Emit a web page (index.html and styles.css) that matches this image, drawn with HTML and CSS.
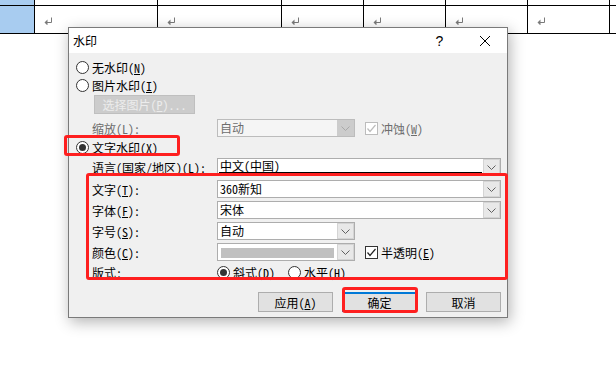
FILE: index.html
```html
<!DOCTYPE html>
<html>
<head>
<meta charset="utf-8">
<title>水印</title>
<link rel="stylesheet" href="styles.css">
</head>

<body>

<div class="doc">
  <div class="doc-row doc-row-top">
    <div class="cell cell-sel"></div>
    <div class="cell cell-wide"></div>
    <div class="cell cell-wider"></div>
    <div class="cell cell-narrow"></div>
    <div class="cell cell-narrow"></div>
    <div class="cell cell-narrow"></div>
    <div class="cell cell-narrow"></div>
    <div class="cell cell-rest"></div>
  </div>
  <div class="doc-row doc-row-main">
    <div class="cell cell-sel"></div>
    <div class="cell cell-wide"><svg class="para" width="9" height="8" viewBox="0 0 9 8"><path d="M7.5 0.5V5.5H2.5" stroke="#7a7a7a" fill="none"/><path d="M0.5 5.5L3.5 2.5V8.5Z" fill="#7a7a7a"/></svg></div>
    <div class="cell cell-wider"><svg class="para" width="9" height="8" viewBox="0 0 9 8"><path d="M7.5 0.5V5.5H2.5" stroke="#7a7a7a" fill="none"/><path d="M0.5 5.5L3.5 2.5V8.5Z" fill="#7a7a7a"/></svg></div>
    <div class="cell cell-narrow"><svg class="para" width="9" height="8" viewBox="0 0 9 8"><path d="M7.5 0.5V5.5H2.5" stroke="#7a7a7a" fill="none"/><path d="M0.5 5.5L3.5 2.5V8.5Z" fill="#7a7a7a"/></svg></div>
    <div class="cell cell-narrow"><svg class="para" width="9" height="8" viewBox="0 0 9 8"><path d="M7.5 0.5V5.5H2.5" stroke="#7a7a7a" fill="none"/><path d="M0.5 5.5L3.5 2.5V8.5Z" fill="#7a7a7a"/></svg></div>
    <div class="cell cell-narrow"><svg class="para" width="9" height="8" viewBox="0 0 9 8"><path d="M7.5 0.5V5.5H2.5" stroke="#7a7a7a" fill="none"/><path d="M0.5 5.5L3.5 2.5V8.5Z" fill="#7a7a7a"/></svg></div>
    <div class="cell cell-narrow"><svg class="para" width="9" height="8" viewBox="0 0 9 8"><path d="M7.5 0.5V5.5H2.5" stroke="#7a7a7a" fill="none"/><path d="M0.5 5.5L3.5 2.5V8.5Z" fill="#7a7a7a"/></svg></div>
    <div class="cell cell-rest"></div>
  </div>
</div>

<div class="dialog">
  <div class="titlebar">
    <span class="title">水印</span>
    <span class="tb-btn">?</span>
    <span class="tb-btn">
      <svg width="12" height="12" viewBox="0 0 12 12"><path d="M1 1L11 11M11 1L1 11" stroke="#000" stroke-width="1" fill="none"/></svg>
    </span>
  </div>

  <div class="dialog-body">
    <div class="opt-row">
      <span class="radio"></span><span>无水印(<u>N</u>)</span>
    </div>
    <div class="opt-row">
      <span class="radio"></span><span>图片水印(<u>I</u>)</span>
    </div>
    <div class="pick-row">
      <span class="btn btn-pick">选择图片(<u>P</u>)...</span>
    </div>

    <div class="form-row row-scale">
      <span class="label disabled">缩放(<u>L</u>):</span>
      <span class="select select-short select-disabled">
        <span class="select-text">自动</span>
        <span class="select-arrow"><svg width="9" height="5" viewBox="0 0 9 5"><polyline points="0.5,0.5 4.5,4.5 8.5,0.5" fill="none" stroke="#a8a8a8"/></svg></span>
      </span>
      <span class="check check-disabled"><svg width="11" height="11" viewBox="0 0 11 11"><polyline points="1.5,5.5 4,8.5 9.5,2" fill="none" stroke="#bcbcbc" stroke-width="1.2"/></svg></span>
      <span class="disabled">冲蚀(<u>W</u>)</span>
    </div>

    <div class="opt-row row-text">
      <span class="radio checked"></span><span>文字水印(<u>X</u>)</span>
    </div>

    <div class="form-row row-lang">
      <span class="label">语言(国家/地区)(<u>L</u>):</span>
      <span class="select select-long">
        <span class="select-text focused">中文(中国)</span>
        <span class="select-arrow"><svg width="9" height="5" viewBox="0 0 9 5"><polyline points="0.5,0.5 4.5,4.5 8.5,0.5" fill="none" stroke="#606060"/></svg></span>
      </span>
    </div>

    <div class="form-row row-word">
      <span class="label">文字(<u>T</u>):</span>
      <span class="select select-long">
        <span class="select-text">360新知</span>
        <span class="select-arrow"><svg width="9" height="5" viewBox="0 0 9 5"><polyline points="0.5,0.5 4.5,4.5 8.5,0.5" fill="none" stroke="#606060"/></svg></span>
      </span>
    </div>

    <div class="form-row row-font">
      <span class="label">字体(<u>F</u>):</span>
      <span class="select select-long">
        <span class="select-text">宋体</span>
        <span class="select-arrow"><svg width="9" height="5" viewBox="0 0 9 5"><polyline points="0.5,0.5 4.5,4.5 8.5,0.5" fill="none" stroke="#606060"/></svg></span>
      </span>
    </div>

    <div class="form-row row-size">
      <span class="label">字号(<u>S</u>):</span>
      <span class="select select-short">
        <span class="select-text">自动</span>
        <span class="select-arrow"><svg width="9" height="5" viewBox="0 0 9 5"><polyline points="0.5,0.5 4.5,4.5 8.5,0.5" fill="none" stroke="#606060"/></svg></span>
      </span>
    </div>

    <div class="form-row row-color">
      <span class="label">颜色(<u>C</u>):</span>
      <span class="select select-short">
        <span class="color-swatch"></span>
        <span class="select-arrow"><svg width="9" height="5" viewBox="0 0 9 5"><polyline points="0.5,0.5 4.5,4.5 8.5,0.5" fill="none" stroke="#606060"/></svg></span>
      </span>
      <span class="check"><svg width="11" height="11" viewBox="0 0 11 11"><polyline points="1.5,5.5 4,8.5 9.5,2" fill="none" stroke="#222" stroke-width="1.2"/></svg></span>
      <span>半透明(<u>E</u>)</span>
    </div>

    <div class="form-row row-layout">
      <span class="label">版式:</span>
      <span class="layout-opt"><span class="radio checked"></span><span>斜式(<u>D</u>)</span></span>
      <span class="layout-opt"><span class="radio"></span><span>水平(<u>H</u>)</span></span>
    </div>

    <div class="button-bar">
      <span class="btn">应用(<u>A</u>)</span>
      <span class="btn btn-default">确定</span>
      <span class="btn">取消</span>
    </div>
  </div>
</div>

<!-- red annotation boxes drawn over the dialog -->
<div class="mark-box mark-radio"></div>
<div class="mark-box mark-fields"></div>
<div class="mark-box mark-ok"></div>

</body>
</html>
```

FILE: styles.css
```css
body {
  background-color: #fff;
  color: #000;
  font-family: 'Noto Sans CJK SC', 'DejaVu Sans', sans-serif;
  font-feature-settings: "hwid";
  font-size: 12px;
  height: 389px;
  margin: 0;
  overflow: hidden;
  position: relative;
  width: 616px;
}

u {
  text-decoration: underline;
  text-underline-offset: 1px;
}


/* Document table behind the dialog */
.doc-row {
  border-bottom: 1px solid #000;
  box-sizing: border-box;
  display: flex;
}
.doc-row-top {
  height: 6px;
}
.doc-row-main {
  height: 28px;
}
.cell {
  border-right: 1px solid #000;
  box-sizing: border-box;
  flex: none;
}
.cell-sel {
  background-color: #a8ccf0;
  width: 35px;
}
.cell-wide {
  width: 123px;
}
.cell-wider {
  width: 124px;
}
.cell-narrow {
  width: 82px;
}
.cell-rest {
  border-right: none;
  flex: 1;
}
.para {
  display: block;
  margin: 11px 0 0 9px;
}


/* Dialog window */
.dialog {
  background-color: #f0f0f0;
  border: 1px solid #7a7a7a;
  box-shadow: 2px 4px 14px rgba(0, 0, 0, 0.3);
  box-sizing: border-box;
  height: 291px;
  left: 68px;
  position: absolute;
  top: 27px;
  width: 440px;
}

.titlebar {
  align-items: center;
  background-color: #fff;
  display: flex;
  height: 25px;
}
.title {
  flex: 1;
  padding-left: 4px;
}
.tb-btn {
  align-items: center;
  display: flex;
  font-family: 'Liberation Sans', sans-serif;
  font-size: 14px;
  height: 25px;
  justify-content: center;
  width: 45px;
}

.dialog-body {
  padding: 5px 6px 0 7px;
}

.opt-row {
  align-items: center;
  display: flex;
  height: 18px;
}

.radio {
  align-items: center;
  background-color: #fff;
  border: 1px solid #333;
  border-radius: 50%;
  box-sizing: border-box;
  display: flex;
  flex: none;
  height: 13px;
  justify-content: center;
  margin-right: 3px;
  width: 13px;
}
.radio.checked::after {
  background-color: #333;
  border-radius: 50%;
  content: "";
  height: 7px;
  width: 7px;
}

.check {
  align-items: center;
  background-color: #fff;
  border: 1px solid #333;
  box-sizing: border-box;
  display: flex;
  flex: none;
  height: 13px;
  justify-content: center;
  margin: 0 3px 0 10px;
  width: 13px;
}
.check-disabled {
  border-color: #bcbcbc;
}

.disabled {
  color: #6d6d6d;
}

.pick-row {
  display: flex;
  height: 19px;
  margin: 1px 0 0 18px;
}

.btn {
  align-items: center;
  background-color: #e1e1e1;
  border: 1px solid #adadad;
  box-sizing: border-box;
  display: flex;
  height: 20px;
  justify-content: center;
  width: 75px;
}
.btn-pick {
  background-color: #cccccc;
  border-color: #bfbfbf;
  color: #ececec;
  height: 19px;
  width: 101px;
}
.btn-default {
  border: 2px solid #0078d7;
}


/* Label + field rows */
.form-row {
  align-items: center;
  display: flex;
  height: 18px;
  padding-left: 16px;
}
.label {
  flex: none;
  width: 125px;
}
.row-scale {
  margin-top: 5px;
}
.row-text {
  margin-top: 1px;
}
.row-lang {
  margin-top: 2px;
}
.row-word {
  margin-top: 4px;
}
.row-font,
.row-size,
.row-color {
  margin-top: 3px;
}
.row-layout {
  margin-top: 2px;
}

.select {
  background-color: #fff;
  border: 1px solid #adadad;
  box-sizing: border-box;
  display: flex;
  flex: none;
  height: 18px;
}
.select-long {
  width: 284px;
}
.select-short {
  width: 138px;
}
.select-text {
  flex: 1;
  line-height: 16px;
  padding-left: 2px;
}
.select-text.focused {
  border-bottom: 1px solid #000;
  box-sizing: border-box;
  height: 14px;
  line-height: 13px;
  margin: 0 1px 0 1px;
  padding-left: 1px;
}
.select-arrow {
  align-items: center;
  background-color: #e8e8e8;
  border: 1px solid #d4d4d4;
  box-sizing: border-box;
  display: flex;
  justify-content: center;
  width: 17px;
}
.select-disabled {
  background-color: #f5f5f5;
  border-color: #bcbcbc;
  color: #6d6d6d;
}
.select-disabled .select-arrow {
  background-color: #cccccc;
  border-color: #cccccc;
}

.color-swatch {
  background-color: #c0c0c0;
  flex: 1;
  margin: 4px 3px 2px 3px;
}

.layout-opt {
  align-items: center;
  display: flex;
  width: 71px;
}

.button-bar {
  display: flex;
  gap: 9px;
  justify-content: flex-end;
  margin-top: 11px;
}


/* Red highlight boxes */
.mark-box {
  border: 3px solid #fe1f1f;
  border-radius: 3px;
  box-sizing: border-box;
  position: absolute;
}
.mark-radio {
  height: 21px;
  left: 64px;
  top: 135px;
  width: 116px;
}
.mark-fields {
  height: 107px;
  left: 86px;
  top: 173px;
  width: 422px;
}
.mark-ok {
  height: 26px;
  left: 342px;
  top: 287px;
  width: 76px;
}
```
